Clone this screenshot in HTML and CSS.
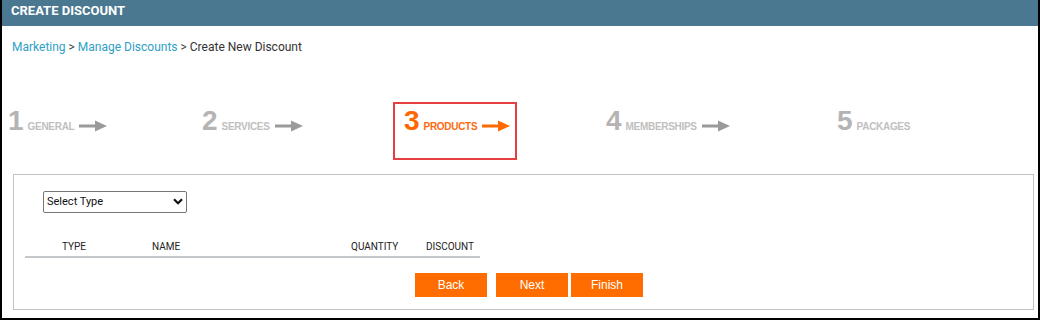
FILE: index.html
```html
<!DOCTYPE html>
<html lang="en">
<head>
<meta charset="utf-8">
<title>Create Discount</title>
<link rel="stylesheet" href="styles.css">
</head>
<body>
<div class="page">
  <div class="header">CREATE DISCOUNT</div>
  <div class="crumbs">
    <a class="crumb-link" href="#">Marketing</a><span class="sep"> &gt; </span><a class="crumb-link" href="#">Manage Discounts</a><span class="sep"> &gt; </span><span class="crumb-current">Create New Discount</span>
  </div>
  <div class="steps">
    <div class="step"><span class="num">1</span><span class="label">GENERAL</span><svg class="arrow" width="28" height="12" viewBox="0 0 28 12"><rect x="0" y="4.5" width="17" height="3"/><polygon points="16,0.5 28,6 16,11.5"/></svg></div>
    <div class="step"><span class="num">2</span><span class="label">SERVICES</span><svg class="arrow" width="28" height="12" viewBox="0 0 28 12"><rect x="0" y="4.5" width="17" height="3"/><polygon points="16,0.5 28,6 16,11.5"/></svg></div>
    <div class="step active"><span class="num">3</span><span class="label">PRODUCTS</span><svg class="arrow" width="28" height="12" viewBox="0 0 28 12"><rect x="0" y="4.5" width="17" height="3"/><polygon points="16,0.5 28,6 16,11.5"/></svg></div>
    <div class="step"><span class="num">4</span><span class="label">MEMBERSHIPS</span><svg class="arrow" width="28" height="12" viewBox="0 0 28 12"><rect x="0" y="4.5" width="17" height="3"/><polygon points="16,0.5 28,6 16,11.5"/></svg></div>
    <div class="step"><span class="num">5</span><span class="label">PACKAGES</span></div>
  </div>
  <div class="panel">
    <div class="select-wrap">
      <select class="type-select">
        <option>Select Type</option>
      </select>
      <svg class="chevron" width="10" height="7" viewBox="0 0 10 7"><path d="M1 1.2 L5 5.2 L9 1.2" fill="none" stroke="#111" stroke-width="2.2"/></svg>
    </div>
    <div class="table-head">
      <div class="th">TYPE</div>
      <div class="th">NAME</div>
      <div class="th">QUANTITY</div>
      <div class="th">DISCOUNT</div>
    </div>
    <div class="actions">
      <button class="btn btn-back">Back</button>
      <button class="btn btn-next">Next</button>
      <button class="btn btn-finish">Finish</button>
    </div>
  </div>
</div>
</body>
</html>
```
FILE: styles.css
```css
html, body {
  margin: 0;
  padding: 0;
  background: #ffffff;
}

.page {
  width: 1040px;
  height: 320px;
  box-sizing: border-box;
  border: 2px solid #000;
  border-top: 0;
  font-family: Roboto, "Liberation Sans", Arial, sans-serif;
  overflow: hidden;
}

.header {
  height: 26px;
  box-sizing: border-box;
  background: #4b7891;
  color: #ffffff;
  font-weight: 700;
  font-size: 13px;
  line-height: 22px;
  padding-left: 9px;
}

.crumbs {
  margin-top: 14px;
  padding-left: 10px;
  font-size: 12px;
  line-height: 14px;
  color: #333333;
  height: 14px;
}

.crumb-link {
  color: #2fa0c6;
  text-decoration: none;
}

.sep {
  color: #444444;
}

.crumb-current {
  color: #333333;
}

.steps {
  margin-top: 48px;
  padding-left: 6px;
  display: grid;
  grid-template-columns: 194px 191px 213px 231px 1fr;
  align-items: baseline;
  justify-items: start;
  font-family: "Liberation Sans", Arial, sans-serif;
}

.step {
  line-height: 28px;
  white-space: nowrap;
  color: #b4b4b4;
}

.step .num {
  font-size: 28px;
  font-weight: 700;
}

.step .label {
  font-size: 10px;
  line-height: 10px;
  font-weight: 700;
  letter-spacing: -0.3px;
  margin-left: 4px;
  color: #c0c0c0;
}

.step .arrow {
  display: inline-block;
  vertical-align: -2px;
  margin-left: 5px;
  fill: #9a9a9a;
}

.step.active {
  border: 2px solid #e5403f;
  padding: 3px 5px 19px 9px;
  color: #ff6600;
}

.step.active .label {
  color: #ff6a10;
}

.step.active .arrow {
  fill: #ff6a00;
}

.panel {
  margin: 14px 4px 0 11px;
  border: 1px solid #c3c3c3;
  padding: 15px 0 12px 0;
}

.select-wrap {
  position: relative;
  margin-left: 29px;
  width: 144px;
  height: 22px;
}

.type-select {
  appearance: none;
  -webkit-appearance: none;
  width: 144px;
  height: 22px;
  box-sizing: border-box;
  border: 1px solid #767676;
  border-radius: 2px;
  background: #ffffff;
  font-family: Roboto, "Liberation Sans", Arial, sans-serif;
  font-size: 11px;
  color: #111111;
  padding: 0 0 0 3px;
  margin: 0;
  outline: none;
}

.chevron {
  position: absolute;
  left: 130px;
  top: 8px;
  pointer-events: none;
}

.table-head {
  margin: 28px 0 0 11px;
  width: 455px;
  box-sizing: border-box;
  padding: 0 0 3px 37px;
  display: grid;
  grid-template-columns: 90px 199px 75px auto;
  border-bottom: 2px solid #c4c7ca;
}

.th {
  font-size: 10px;
  line-height: 13px;
  color: #222222;
}

.actions {
  margin-top: 15px;
  padding-left: 401px;
  display: flex;
}

.btn {
  width: 72px;
  height: 24px;
  border: 0;
  padding: 0;
  margin: 0;
  background: #ff6d00;
  color: #ffffff;
  font-family: "Liberation Sans", Arial, sans-serif;
  font-size: 12px;
  line-height: 24px;
  text-align: center;
}

.btn-next {
  margin-left: 9px;
}

.btn-finish {
  margin-left: 3px;
}
```
